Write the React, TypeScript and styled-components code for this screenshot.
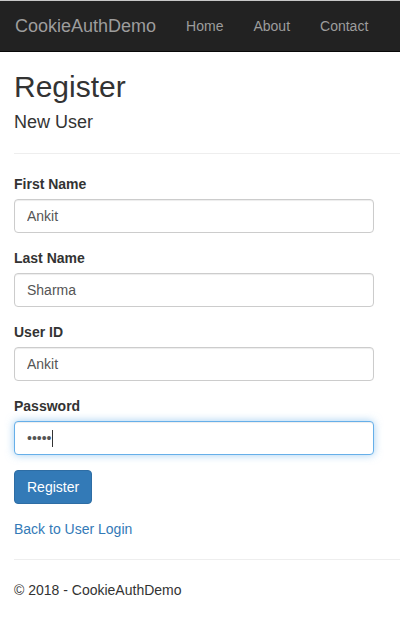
import React from 'react'
import styled, { createGlobalStyle } from 'styled-components'

const GlobalStyle = createGlobalStyle`
  * {
    box-sizing: border-box;
  }

  body {
    margin: 0;
    background: #fff;
    color: #333;
    font-family: "Liberation Sans", Arial, Helvetica, sans-serif;
    font-size: 14px;
    line-height: 1.42857143;
  }
`

const StyledNavbar = styled.nav`
  display: flex;
  align-items: center;
  height: 52px;
  background: #222;
  border-top: 1px solid #c8c8c8;
  border-bottom: 1px solid #080808;
`

const StyledBrand = styled.a`
  padding: 15px;
  font-size: 18px;
  line-height: 20px;
  color: #9d9d9d;
  text-decoration: none;
`

const StyledNavList = styled.ul`
  display: flex;
  margin: 0;
  padding: 0;
  list-style: none;
`

const StyledNavLink = styled.a`
  display: block;
  padding: 15px;
  font-size: 14px;
  line-height: 20px;
  color: #9d9d9d;
  text-decoration: none;
`

const StyledContainer = styled.div`
  padding-left: 14px;
`

const StyledTitle = styled.h2`
  margin: 18px 0 10px;
  font-size: 30px;
  font-weight: 500;
  line-height: 1.1;
`

const StyledSubtitle = styled.h4`
  margin: 10px 0;
  font-size: 18px;
  font-weight: 500;
  line-height: 1.1;
`

const StyledRule = styled.hr`
  margin: 20px 0;
  border: 0;
  border-top: 1px solid #eee;
`

const StyledForm = styled.form`
  width: 360px;
`

const StyledGroup = styled.div`
  margin-bottom: 15px;
`

const StyledLabel = styled.label`
  display: inline-block;
  margin-bottom: 5px;
  font-weight: 700;
`

const StyledFieldWrapp = styled.div`
  position: relative;
`

const StyledInput = styled.input<{ $focused?: boolean }>`
  display: block;
  width: 100%;
  height: 34px;
  padding: 6px 12px;
  font-family: inherit;
  font-size: 14px;
  line-height: 1.42857143;
  color: #555;
  background: #fff;
  border: 1px solid ${(props) => (props.$focused ? '#66afe9' : '#ccc')};
  border-radius: 4px;
  outline: 0;
  box-shadow: ${(props) =>
    props.$focused
      ? 'inset 0 1px 1px rgba(0, 0, 0, 0.075), 0 0 8px rgba(102, 175, 233, 0.6)'
      : 'inset 0 1px 1px rgba(0, 0, 0, 0.075)'};
`

const StyledCaret = styled.span`
  position: absolute;
  left: 38px;
  top: 9px;
  width: 1px;
  height: 17px;
  background: #333;
`

const StyledButton = styled.button`
  display: inline-block;
  padding: 6px 12px;
  font-family: inherit;
  font-size: 14px;
  line-height: 1.42857143;
  color: #fff;
  background: #337ab7;
  border: 1px solid #2e6da4;
  border-radius: 4px;
  cursor: pointer;
`

const StyledBackLink = styled.a`
  display: inline-block;
  margin-top: 15px;
  color: #337ab7;
  text-decoration: none;
`

const StyledFooterText = styled.p`
  margin: 0 0 10px;
`

const fields = [
  { id: 'firstName', label: 'First Name', value: 'Ankit' },
  { id: 'lastName', label: 'Last Name', value: 'Sharma' },
  { id: 'userId', label: 'User ID', value: 'Ankit' },
]

const App: React.FC = () => {
  return (
    <>
      <GlobalStyle />
      <StyledNavbar>
        <StyledBrand href="#">CookieAuthDemo</StyledBrand>
        <StyledNavList>
          <li>
            <StyledNavLink href="#">Home</StyledNavLink>
          </li>
          <li>
            <StyledNavLink href="#">About</StyledNavLink>
          </li>
          <li>
            <StyledNavLink href="#">Contact</StyledNavLink>
          </li>
        </StyledNavList>
      </StyledNavbar>
      <StyledContainer>
        <StyledTitle>Register</StyledTitle>
        <StyledSubtitle>New User</StyledSubtitle>
        <StyledRule />
        <StyledForm>
          {fields.map((field) => (
            <StyledGroup key={field.id}>
              <StyledLabel htmlFor={field.id}>{field.label}</StyledLabel>
              <StyledInput id={field.id} type="text" defaultValue={field.value} />
            </StyledGroup>
          ))}
          <StyledGroup>
            <StyledLabel htmlFor="password">Password</StyledLabel>
            <StyledFieldWrapp>
              <StyledInput id="password" type="password" defaultValue="12345" $focused />
              <StyledCaret />
            </StyledFieldWrapp>
          </StyledGroup>
          <StyledButton type="button">Register</StyledButton>
        </StyledForm>
        <StyledBackLink href="#">Back to User Login</StyledBackLink>
        <StyledRule />
        <footer>
          <StyledFooterText>© 2018 - CookieAuthDemo</StyledFooterText>
        </footer>
      </StyledContainer>
    </>
  )
}

export default App
